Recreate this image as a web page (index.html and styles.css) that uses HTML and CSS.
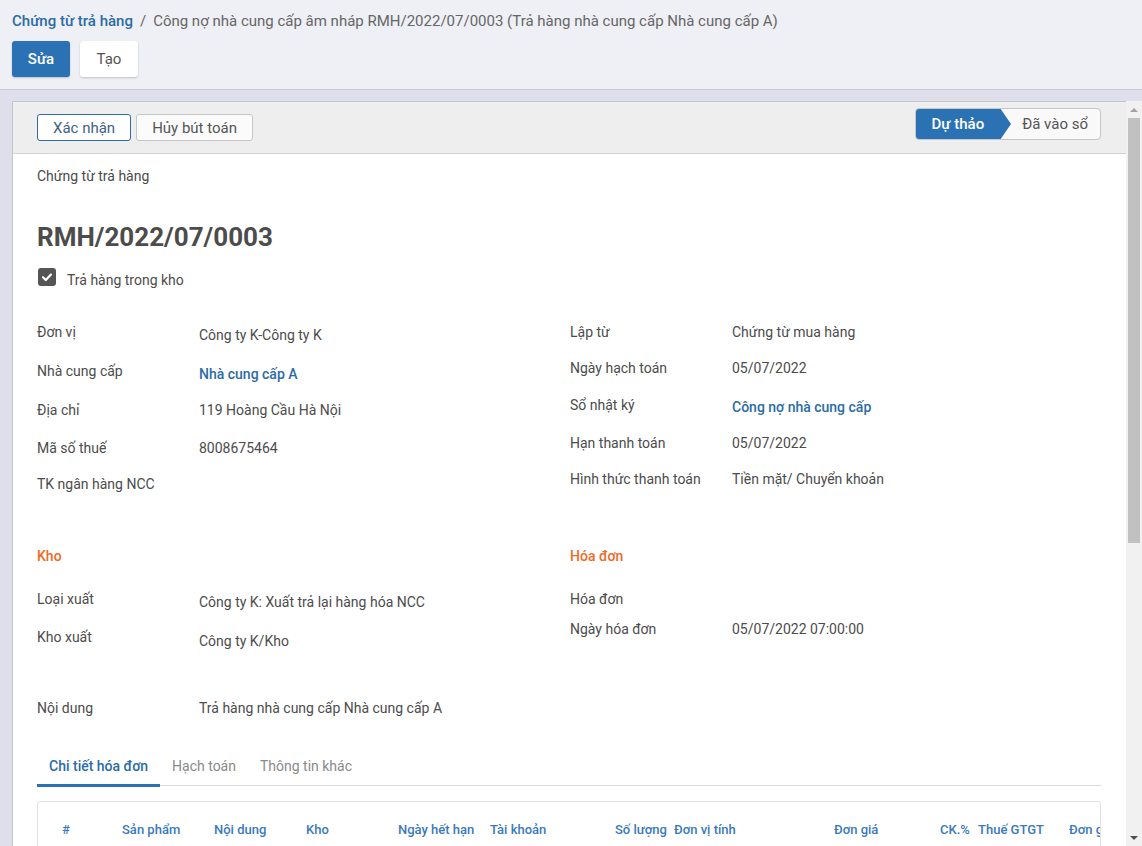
FILE: index.html
```html
<!DOCTYPE html>
<html lang="vi">
<head>
<meta charset="utf-8">
<title>Chứng từ trả hàng</title>
<link rel="stylesheet" href="styles.css">
</head>
<body>
<div class="cp">
  <div class="crumbs"><a class="crumb-link">Chứng từ trả hàng</a><span class="sep">/</span><span class="crumb-cur">Công nợ nhà cung cấp âm nháp RMH/2022/07/0003 (Trả hàng nhà cung cấp Nhà cung cấp A)</span></div>
  <div class="cp-buttons">
    <button class="btn btn-primary">Sửa</button>
    <button class="btn btn-light">Tạo</button>
  </div>
</div>
<div class="band"></div>
<div class="main">
  <div class="scroller">
    <div class="sheet">
      <div class="statusbar">
        <div class="sb-left">
          <button class="sbtn sbtn-blue">Xác nhận</button>
          <button class="sbtn">Hủy bút toán</button>
        </div>
        <div class="states">
          <span class="state active">Dự thảo</span>
          <span class="state">Đã vào sổ</span>
        </div>
      </div>
      <div class="body">
        <div class="doc-type">Chứng từ trả hàng</div>
        <h1 class="title">RMH/2022/07/0003</h1>
        <div class="check-row">
          <span class="cbox"><svg viewBox="0 0 18 18" width="18" height="18"><path d="M5 9.2 L7.8 12 L13 6.5" fill="none" stroke="#fff" stroke-width="2.2" stroke-linecap="round" stroke-linejoin="round"/></svg></span>
          <span class="check-label">Trả hàng trong kho</span>
        </div>

        <div class="grid g1">
          <div class="col">
            <div class="row h39"><div class="lbl">Đơn vị</div><div class="val off3">Công ty K-Công ty K</div></div>
            <div class="row h39"><div class="lbl">Nhà cung cấp</div><div class="val off3 link">Nhà cung cấp A</div></div>
            <div class="row h38"><div class="lbl">Địa chỉ</div><div class="val">119 Hoàng Cầu Hà Nội</div></div>
            <div class="row h36"><div class="lbl">Mã số thuế</div><div class="val">8008675464</div></div>
            <div class="row h36"><div class="lbl">TK ngân hàng NCC</div><div class="val"></div></div>
          </div>
          <div class="col">
            <div class="row h36"><div class="lbl">Lập từ</div><div class="val">Chứng từ mua hàng</div></div>
            <div class="row h37"><div class="lbl">Ngày hạch toán</div><div class="val">05/07/2022</div></div>
            <div class="row h38"><div class="lbl">Sổ nhật ký</div><div class="val off2 link">Công nợ nhà cung cấp</div></div>
            <div class="row h36"><div class="lbl">Hạn thanh toán</div><div class="val">05/07/2022</div></div>
            <div class="row h36"><div class="lbl">Hình thức thanh toán</div><div class="val">Tiền mặt/ Chuyển khoản</div></div>
          </div>
        </div>

        <div class="grid g2">
          <div class="col">
            <div class="sec-title">Kho</div>
            <div class="row h38"><div class="lbl">Loại xuất</div><div class="val off3">Công ty K: Xuất trả lại hàng hóa NCC</div></div>
            <div class="row h36"><div class="lbl">Kho xuất</div><div class="val off4">Công ty K/Kho</div></div>
          </div>
          <div class="col">
            <div class="sec-title">Hóa đơn</div>
            <div class="row h30"><div class="lbl">Hóa đơn</div><div class="val"></div></div>
            <div class="row h36"><div class="lbl">Ngày hóa đơn</div><div class="val">05/07/2022 07:00:00</div></div>
          </div>
        </div>

        <div class="row noidung"><div class="lbl">Nội dung</div><div class="val">Trả hàng nhà cung cấp Nhà cung cấp A</div></div>

        <div class="tabs">
          <span class="tab active">Chi tiết hóa đơn</span>
          <span class="tab">Hạch toán</span>
          <span class="tab">Thông tin khác</span>
        </div>

        <div class="table-wrap">
          <table class="lines">
            <colgroup>
              <col class="w-no"><col class="w-sp"><col class="w-nd"><col class="w-kho"><col class="w-nhh"><col class="w-tk"><col class="w-sl"><col class="w-dvt"><col class="w-dg"><col class="w-ck"><col class="w-thue"><col class="w-dgs">
            </colgroup>
            <thead>
              <tr>
                <th class="c-no">#</th>
                <th>Sản phẩm</th>
                <th>Nội dung</th>
                <th>Kho</th>
                <th>Ngày hết hạn</th>
                <th>Tài khoản</th>
                <th>Số lượng</th>
                <th>Đơn vị tính</th>
                <th>Đơn giá</th>
                <th>CK.%</th>
                <th>Thuế GTGT</th>
                <th>Đơn giá sau thuế</th>
              </tr>
            </thead>
            <tbody>
              <tr>
                <td class="c-no">1</td><td>Hàng hóa A</td><td>Hàng hóa A</td><td>Công ty K/Kho</td><td></td><td>1561</td><td>1,00</td><td>Cái</td><td>100.000</td><td>0,00</td><td>10%</td><td>110.000</td>
              </tr>
            </tbody>
          </table>
        </div>
        <div class="totals">
          <div class="trow"><span>Tổng tiền hàng:</span><span>100.000 ₫</span></div>
          <div class="trow"><span>Tiền thuế:</span><span>10.000 ₫</span></div>
          <div class="trow total"><span>Tổng cộng:</span><span>110.000 ₫</span></div>
        </div>
      </div>
    </div>
  </div>
  <div class="vscroll">
    <div class="arrow up"></div>
    <div class="track"><div class="thumb"></div></div>
    <div class="arrow down"></div>
  </div>
</div>
</body>
</html>
```
FILE: styles.css
```css
* { box-sizing: border-box; }
html, body { margin: 0; padding: 0; }
body {
  width: 1142px;
  height: 846px;
  overflow: hidden;
  font-family: Roboto, "Noto Sans", sans-serif;
  font-size: 14px;
  color: #4c4c4c;
  background: #dedfea;
}
.cp {
  height: 90px;
  background: #eff0f5;
  border-bottom: 1px solid #c8c9d4;
  padding: 11px 12px 0;
}
.crumbs {
  font-size: 15px;
  line-height: 20px;
  color: #666;
  white-space: nowrap;
}
.crumb-link { color: #2b6ca6; font-weight: 500; }
.sep { margin: 0 7px; color: #666; }
.cp-buttons { display: flex; gap: 10px; margin-top: 10px; }
.btn {
  font-family: inherit;
  font-size: 15px;
  height: 36px;
  width: 58px;
  border-radius: 3px;
  border: none;
  padding: 0;
}
.btn-primary { background: #2a72b3; color: #fff; font-weight: 500; box-shadow: 0 1px 2px rgba(0,0,0,.2); }
.btn-light { background: #fff; color: #555; box-shadow: 0 1px 2px rgba(0,0,0,.2); }
.band { height: 11px; }
.main { display: flex; height: 745px; }
.scroller {
  flex: 1;
  overflow: hidden;
  padding-left: 12px;
}
.sheet {
  background: #fff;
  border-left: 1px solid #c4c4cc;
  border-top: 1px solid #c4c4cc;
  min-height: 1250px;
}
.vscroll {
  width: 16px;
  background: #f1f1f1;
  display: flex;
  flex-direction: column;
}
.arrow { height: 17px; display: flex; align-items: center; justify-content: center; }
.arrow::before {
  content: "";
  border-left: 4px solid transparent;
  border-right: 4px solid transparent;
}
.arrow.up::before { border-bottom: 4px solid #a3a3a3; }
.arrow.down::before { border-top: 4px solid #505050; }
.track { flex: 1; }
.thumb {
  margin: 0 2px 0 2px;
  height: 425px;
  background: #c1c1c1;
}
.statusbar {
  height: 52px;
  background: #eeeeee;
  border-bottom: 1px solid #d2d2d2;
  padding: 0 25px 0 24px;
  display: flex;
  align-items: center;
  justify-content: space-between;
}
.sb-left { display: flex; gap: 5px; }
.sbtn {
  font-family: inherit;
  font-size: 15px;
  height: 27px;
  padding: 0 15px;
  background: #fbfbfb;
  color: #555;
  border: 1px solid #c6c6c6;
  border-radius: 3px;
  white-space: nowrap;
}
.sbtn-blue { border-color: #2d6ea8; color: #3f6185; background: #fff; }
.states {
  display: flex;
  height: 32px;
  border: 1px solid #c6c6c6;
  border-radius: 4px;
  background: #f9f9f9;
  overflow: hidden;
  margin-top: -8px;
}
.state {
  position: relative;
  display: flex;
  align-items: center;
  font-size: 15px;
  color: #555;
  padding: 0 12px 0 22px;
}
.state.active {
  background: #2a72b3;
  color: #fff;
  font-weight: 500;
  padding: 0 16px 0 17px;
  margin: -1px 0 -1px -1px;
  border-radius: 4px 0 0 4px;
}
.state.active::after {
  content: "";
  position: absolute;
  right: -11px;
  top: 0;
  border-top: 16px solid transparent;
  border-bottom: 16px solid transparent;
  border-left: 11px solid #2a72b3;
}
.body { padding: 0 25px 0 24px; }
.doc-type { margin-top: 12px; line-height: 20px; color: #4a4a4a; }
.title {
  margin: 36px 0 0;
  font-size: 26px;
  font-weight: 700;
  line-height: 30px;
  color: #4c4c4c;
}
.check-row { display: flex; align-items: flex-start; margin-top: 16px; height: 22px; }
.cbox {
  width: 18px; height: 18px;
  background: #555;
  border-radius: 3px;
  display: inline-flex;
  margin-left: 1px;
}
.check-label { margin-left: 11px; color: #4c4c4c; padding-top: 2px; line-height: 20px; }
.grid { display: grid; grid-template-columns: 533px 1fr; }
.g1 { margin-top: 32px; }
.g2 { margin-top: 36px; }
.row { display: flex; }
.h30 { height: 30px; }
.h36 { height: 36px; }
.h37 { height: 37px; }
.h38 { height: 38px; }
.h39 { height: 39px; }
.lbl { width: 162px; flex: none; line-height: 20px; color: #4c4c4c; }
.val { line-height: 20px; color: #4c4c4c; }
.off2 { padding-top: 2px; }
.off3 { padding-top: 3px; }
.off4 { padding-top: 4px; }
.link { color: #2b6ca6; font-weight: 500; }
.sec-title { color: #f26a25; font-weight: 500; line-height: 20px; height: 43px; }
.noidung { margin-top: 35px; }
.tabs {
  margin-top: 28px;
  display: flex;
  border-bottom: 1px solid #dcdcdc;
  height: 40px;
  align-items: flex-start;
}
.tab {
  padding: 10px 12px 0;
  height: 40px;
  line-height: 20px;
  color: #8a8a8a;
  font-size: 14px;
}
.tab.active {
  color: #2b6ca6;
  font-weight: 500;
  border-bottom: 3px solid #2b72b3;
  height: 41px;
}
.table-wrap {
  margin-top: 15px;
  border: 1px solid #e2e2e2;
  border-radius: 3px;
  overflow: hidden;
}
.lines {
  border-collapse: collapse;
  table-layout: fixed;
  width: 1140px;
  font-size: 13px;
}
.w-no { width: 80px; }
.w-sp { width: 92px; }
.w-nd { width: 92px; }
.w-kho { width: 92px; }
.w-nhh { width: 92px; }
.w-tk { width: 125px; }
.w-sl { width: 59px; }
.w-dvt { width: 160px; }
.w-dg { width: 106px; }
.w-ck { width: 38px; }
.w-thue { width: 91px; }
.w-dgs { width: 213px; }
.lines th {
  text-align: left;
  color: #3a79bd;
  font-weight: 500;
  height: 56px;
  padding: 0 0 0 4px;
  white-space: nowrap;
  overflow: hidden;
}
.lines td {
  height: 40px;
  padding: 0 0 0 4px;
  border-top: 1px solid #eee;
  white-space: nowrap;
  overflow: hidden;
}
.lines .c-no { padding-left: 24px; }
.totals { margin: 20px 0 0 auto; width: 300px; padding-bottom: 40px; }
.trow { display: flex; justify-content: space-between; line-height: 28px; }
.trow.total { font-weight: 700; border-top: 1px solid #ccc; }
```
